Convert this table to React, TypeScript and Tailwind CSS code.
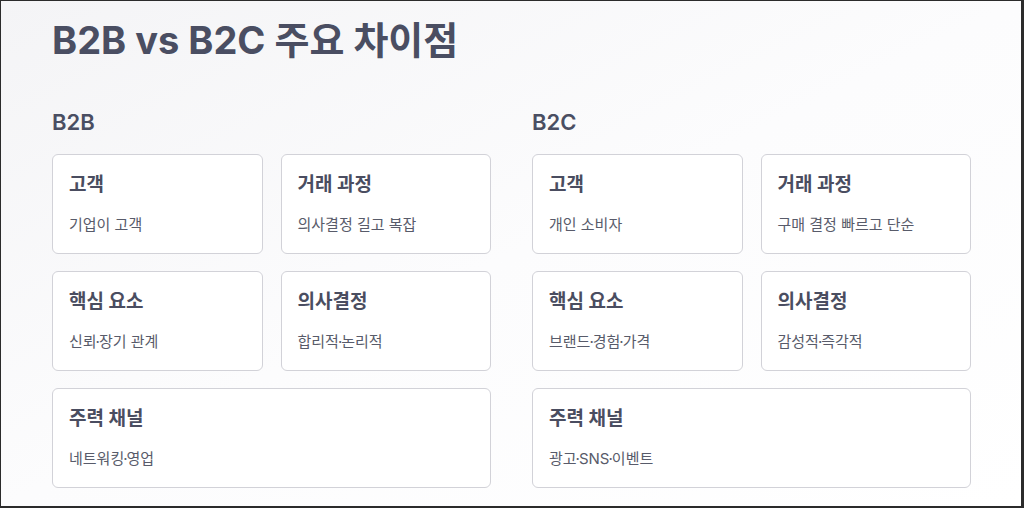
import React from "react";

type Item = { t: string; d: string; wide?: boolean };

const b2b: Item[] = [
  { t: "고객", d: "기업이 고객" },
  { t: "거래 과정", d: "의사결정 길고 복잡" },
  { t: "핵심 요소", d: "신뢰·장기 관계" },
  { t: "의사결정", d: "합리적·논리적" },
  { t: "주력 채널", d: "네트워킹·영업", wide: true },
];

const b2c: Item[] = [
  { t: "고객", d: "개인 소비자" },
  { t: "거래 과정", d: "구매 결정 빠르고 단순" },
  { t: "핵심 요소", d: "브랜드·경험·가격" },
  { t: "의사결정", d: "감성적·즉각적" },
  { t: "주력 채널", d: "광고·SNS·이벤트", wide: true },
];

function Desc({ text }: { text: string }) {
  const parts = text.split("·");
  return (
    <>
      {parts.map((p, i) => (
        <React.Fragment key={i}>
          {i > 0 && <span className="mx-[-1px]">·</span>}
          {p}
        </React.Fragment>
      ))}
    </>
  );
}

function Card({ item }: { item: Item }) {
  return (
    <div
      className={
        "h-[100px] rounded-[6px] border border-[#d2d2d8] bg-white px-[16px] pt-[18px] " +
        (item.wide ? "col-span-2" : "")
      }
    >
      <div className="text-[19px] font-bold leading-[24px] text-[#4a4d60]">{item.t}</div>
      <div className="mt-[18px] text-[15px] leading-[20px] text-[#585b6a]">
        <Desc text={item.d} />
      </div>
    </div>
  );
}

function Column({ title, items }: { title: string; items: Item[] }) {
  return (
    <div className="w-[439px]">
      <h2 className="text-[22px] font-semibold leading-[28px] text-[#4a4e62]">{title}</h2>
      <div className="mt-[18px] grid grid-cols-2 gap-x-[18px] gap-y-[17px]">
        {items.map((it, i) => (
          <Card key={i} item={it} />
        ))}
      </div>
    </div>
  );
}

export default function App() {
  return (
    <div
      className="h-[508px] w-[1024px] overflow-hidden border-t border-l border-r-[3px] border-b-2 border-[#2b2b2b] bg-gradient-to-br from-[#f4f4f6] via-[#fcfcfd] to-white"
      style={{ fontFamily: 'Inter, "Noto Sans CJK KR", "Noto Sans", sans-serif' }}
    >
      <div className="pl-[51px] pt-[15px]">
        <h1 className="text-[38px] font-bold leading-[48px] text-[#4a4e62]">
          B2B vs B2C 주요 차이점
        </h1>
        <div className="mt-[44px] flex gap-[41px]">
          <Column title="B2B" items={b2b} />
          <Column title="B2C" items={b2c} />
        </div>
      </div>
    </div>
  );
}
